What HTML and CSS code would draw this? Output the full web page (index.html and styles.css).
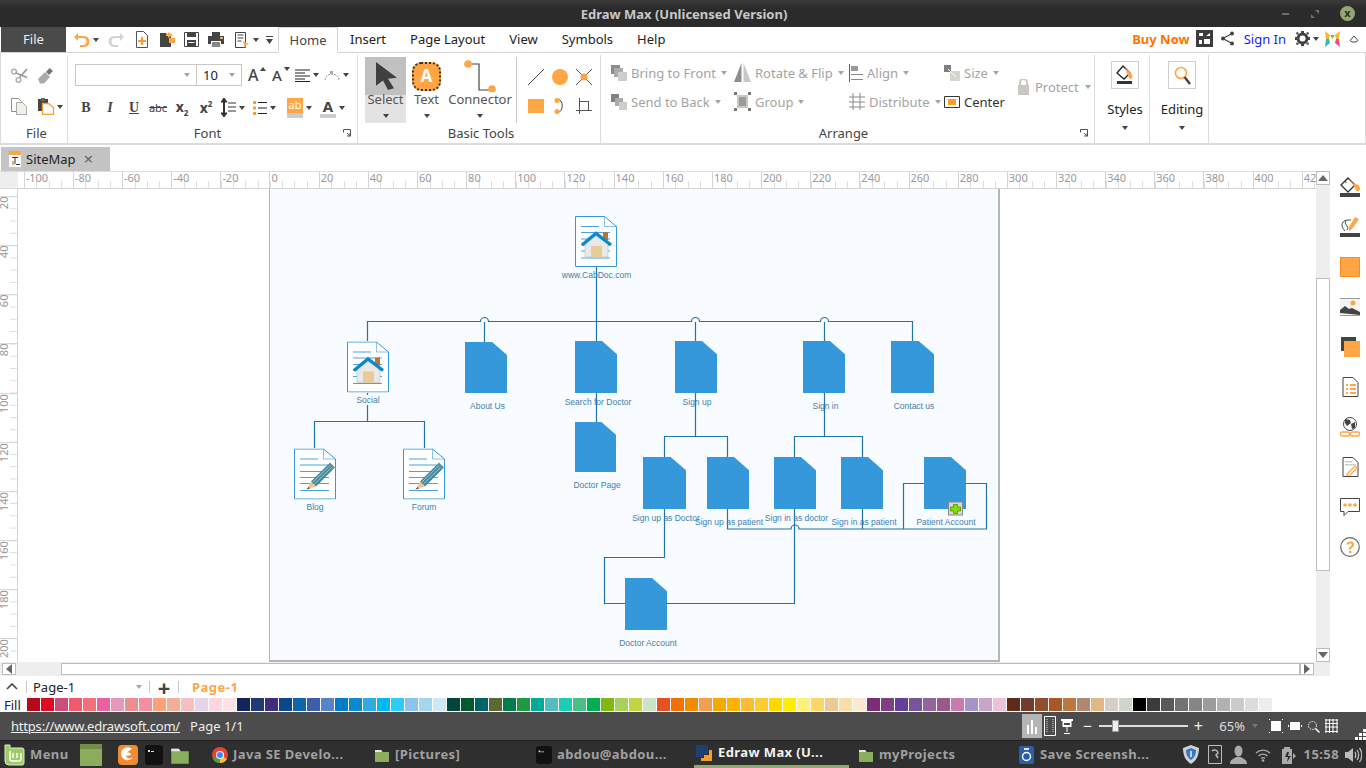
FILE: index.html
```html
<!DOCTYPE html>
<html lang="en">
<head>
    <meta charset="UTF-8">
    <title>Edraw Max (Unlicensed Version)</title>
    <link rel="stylesheet" href="styles.css">
</head>
<body>
<svg class="defs" width="0" height="0">
    <symbol id="docb" viewBox="0 0 42 51" preserveAspectRatio="none"><path d="M0 0H27L42 13V51H0Z" fill="#3498db"/></symbol>
    <symbol id="docline" viewBox="0 0 42 51">
        <path d="M.5.5H29.5L41.5 10.5V50.5H.5Z" fill="#fff" stroke="#3498db"/>
        <path d="M29.5.5V10.5H41.5" fill="none" stroke="#3498db" stroke-width=".6"/>
        <path d="M6 10.500H24M6 16.500H35M6 23H35M6 29H35M6 35H35M6 42H35" stroke="#3498db" stroke-width=".9"/>
    </symbol>
    <symbol id="dochouse" viewBox="0 0 42 51">
        <use href="#docline" width="42" height="51"/>
        <path d="M28 16h5v8h-5z" fill="#bd7336"/>
        <path d="M10 27L21 18 33 27V41H10Z" fill="#e9e9e9" stroke="#bbb" stroke-width=".6"/>
        <path d="M16 30h11v11H16z" fill="#e9cb96"/>
        <path d="M7 29L21 17.500 36 29" fill="none" stroke="#0a8bc9" stroke-width="3.400"/>
    </symbol>
    <symbol id="docpen" viewBox="0 0 42 51">
        <use href="#docline" width="42" height="51"/>
        <path d="M17 33L34 16 39 21 22 38Z" fill="#3f8a9e"/>
        <path d="M19 33.500L35.500 17.500M20.500 35.500L37 19.500" stroke="#cfe4ea" stroke-width=".7"/>
        <path d="M34 16l2-2 5 5-2 2Z" fill="#5f8f9c"/>
        <path d="M17 33L22 38 13 40.500Z" fill="#f5c48c"/>
        <path d="M14.500 38.500L16 40 12.500 41Z" fill="#444"/>
    </symbol>
    <symbol id="folder" viewBox="0 0 16 16"><path d="M1 3h6l1.500 2H15v10H1Z" fill="#8aae5c"/><path d="M1 3h6l1.500 2H1Z" fill="#e6e6e6"/></symbol>
    <symbol id="termicon" viewBox="0 0 18 20"><rect width="18" height="20" rx="3" fill="#111"/><path d="M3 5h2v2H3zM6 6h3v1H6z" fill="#ddd"/></symbol>
</svg>

<header class="titlebar">
    <span class="title-text">Edraw Max (Unlicensed Version)</span>
    <span class="win-min"></span>
    <svg class="win-max" width="8" height="8" viewBox="0 0 8 8"><path d="M4 0h4v4zM0 4l4 4H0z" fill="#6e6e6e"/></svg>
    <span class="win-close">x</span>
</header>

<nav class="tabrow">
    <div class="file-btn">File</div>
    <div class="qat">
        <svg class="qa-undo" width="17" height="15" viewBox="0 0 17 15"><path d="M5 1L1 5l4 4V6h5a3.500 3.500 0 0 1 0 7H7v2h4a5.500 5.500 0 0 0 0-11H5Z" fill="#ffa544"/></svg><i class="caret dark"></i>
        <svg class="qa-redo" width="17" height="15" viewBox="0 0 17 15"><path d="M12 1l4 4-4 4V6H7a3.500 3.500 0 0 0 0 7h3v2H6A5.500 5.500 0 0 1 6 4h6Z" fill="#d5d3cf"/></svg>
        <svg class="qa-new" width="14" height="17" viewBox="0 0 14 17"><path d="M1.500.5h7l4 4v12h-11Z" fill="#fff" stroke="#555"/><path d="M6 6h2v3h3v2H8v3H6v-3H3V9h3Z" fill="#ff9a2e"/></svg>
        <svg class="qa-open" width="15" height="15" viewBox="0 0 15 15"><path d="M0 1h6l2 2h3v12H0Z" fill="#444"/><path d="M8 0l5 3-5 3V4H6V2h2Z" fill="#ffa544"/><path d="M9 6h6v5H9z" fill="#ffa544"/></svg>
        <svg class="qa-save" width="15" height="15" viewBox="0 0 15 15"><path d="M.5.500h14v14H.5Z" fill="#fff" stroke="#444"/><path d="M3 1h9v4H3zM3 8h9v6H3z" fill="#444"/><path d="M4.500 10h6v1h-6z" fill="#fff"/></svg>
        <svg class="qa-print" width="16" height="15" viewBox="0 0 16 15"><path d="M4 0h8v4H4zM0 4h16v8h-3V9H3v3H0z" fill="#444"/><path d="M4 10h8v5H4z" fill="#888"/><path d="M12 5h3v2h-3z" fill="#ffa544"/></svg>
        <svg class="qa-page" width="15" height="16" viewBox="0 0 15 16"><path d="M.5.500h10v15H.5Z" fill="#fff" stroke="#444"/><path d="M2.500 3h6M2.500 6h6M2.500 9h4" stroke="#444"/><path d="M8 9l6 3-3 1-1 3Z" fill="#ffa544"/></svg><i class="caret dark"></i>
        <svg class="qa-more" width="7" height="8" viewBox="0 0 7 8"><path d="M0 0h7v1H0zM0 3h7L3.500 8Z" fill="#444"/></svg>
    </div>
    <div class="tab active">Home</div>
    <div class="tab">Insert</div>
    <div class="tab">Page Layout</div>
    <div class="tab">View</div>
    <div class="tab">Symbols</div>
    <div class="tab">Help</div>
    <div class="tab-right">
        <span class="buy">Buy Now</span>
        <svg width="17" height="17" viewBox="0 0 17 17"><path d="M0 0h17v17H0z" fill="#3c3c3c"/><path d="M3 3h4v3H3zM10 6l4-3v3zM3 10h3v4H3zM8 9h6v5H8z" fill="#fff"/></svg>
        <svg class="share" width="13" height="15" viewBox="0 0 13 15"><circle cx="11" cy="2.500" r="2" fill="#444"/><circle cx="2" cy="7.500" r="2" fill="#444"/><circle cx="11" cy="12.500" r="2" fill="#444"/><path d="M11 2.500L2 7.500 11 12.500" fill="none" stroke="#444" stroke-width="1.200"/></svg>
        <span class="signin">Sign In</span>
        <svg class="gear" width="15" height="15" viewBox="0 0 15 15"><circle cx="7.500" cy="7.500" r="4.500" fill="none" stroke="#444" stroke-width="3"/><path d="M6 0h3v3H6zM6 12h3v3H6zM0 6h3v3H0zM12 6h3v3h-3zM2 1l2 1-2 2-1-2zM13 1l1 1-1 2-2-2zM2 14l-1-1 1-2 2 2zM13 14l-2-1 2-2 1 2z" fill="#444"/></svg><i class="caret dark"></i>
        <svg class="logo" width="15" height="18" viewBox="0 0 15 18"><path d="M0 1l5 4-1 4H1zM15 1l-5 4 1 4h3z" fill="#f4b73b"/><path d="M0 17l5-4-1-4H1z" fill="#2fb7d6"/><path d="M15 17l-5-4 1-4h3z" fill="#ee4d7d"/><path d="M5 5h5l-2.500 4z" fill="#86c440"/></svg>
        <svg class="collapse" width="10" height="8" viewBox="0 0 10 8"><path d="M1 5.500L5 1l4 4.500-2 1.500H3Z" fill="none" stroke="#444"/></svg>
    </div>
</nav>

<section class="ribbon">
    <div class="group group-file">
        <div class="group-body file-grid">
            <svg width="17" height="15" viewBox="0 0 17 15"><circle cx="3" cy="3.500" r="2.400" fill="none" stroke="#aaa" stroke-width="1.400"/><circle cx="7.500" cy="12" r="2.400" fill="none" stroke="#aaa" stroke-width="1.400"/><path d="M5 5L16 9.500M8.500 9.500L16 1" fill="none" stroke="#9a9a9a" stroke-width="1.700"/></svg>
            <svg width="16" height="16" viewBox="0 0 16 16"><path d="M12.500 0L16 3 12 7 9 4Z" fill="#777"/><path d="M8 4l5 5-6 6.500H3L1 11Z" fill="#aaa"/></svg>
            <svg width="16" height="17" viewBox="0 0 16 17"><path d="M.5.500h7l3 3v10h-10Z" fill="#fff" stroke="#8f8f8f"/><path d="M5.500 4.500h6l4 4v8h-10Z" fill="#f2f0e8" stroke="#aaa"/></svg>
            <span class="paste"><svg width="18" height="17" viewBox="0 0 18 17"><path d="M1 1h10v12H1z" fill="#444"/><path d="M4 0h4v3H4z" fill="#666"/><path d="M5.500 5.500h6l5 4v7h-11Z" fill="#fff" stroke="#ff9a2e" stroke-width="1.300"/></svg><i class="caret dark"></i></span>
        </div>
        <div class="group-label">File</div>
    </div>

    <div class="group group-font">
        <div class="group-body">
            <div class="font-row1">
                <div class="combo combo-name"><i class="caret grey"></i></div>
                <div class="combo combo-size">10<i class="caret grey"></i></div>
                <span class="grow-a">A<i class="tri-up"></i></span>
                <span class="grow-a small">A<i class="tri-down"></i></span>
                <span class="icon-caret al"><svg width="15" height="13" viewBox="0 0 15 13"><path d="M0 1h15M0 4h10M0 7h15M0 10h10M0 12.500h15" stroke="#222" stroke-width="1.200"/></svg><i class="caret dark"></i></span>
                <span class="icon-caret"><svg width="16" height="12" viewBox="0 0 16 12"><path d="M1 11C2 3 14 3 15 11" fill="none" stroke="#999" stroke-dasharray="2 1"/><path d="M6 2h3v3H6z" fill="#aaa"/></svg><i class="caret dark"></i></span>
            </div>
            <div class="font-row2">
                <b class="fmt serif">B</b>
                <i class="fmt serif">I</i>
                <u class="fmt serif">U</u>
                <s class="fmt abc">abc</s>
                <span class="fmt script">x<sub>2</sub></span>
                <span class="fmt script">x<sup>2</sup></span>
                <span class="icon-caret spc"><svg width="15" height="19" viewBox="0 0 15 19"><path d="M3 0l3 4H0zM3 19l3-4H0zM2.500 4h1v11h-1zM7 5h8M7 9h8M7 13h8" stroke="#333" fill="#333"/></svg><i class="caret dark"></i></span>
                <span class="icon-caret lst"><svg width="14" height="14" viewBox="0 0 14 14"><path d="M0 0h3v3H0zM0 5.500h3v3H0zM0 11h3v3H0z" fill="#ff9a2e"/><path d="M5 1.500h9M5 7h9M5 12.500h9" stroke="#222" stroke-width="1.200"/></svg><i class="caret dark"></i></span>
                <span class="icon-caret hl"><span class="ab-box">ab</span><i class="caret dark"></i></span>
                <span class="icon-caret fc"><span class="a-box">A</span><i class="caret dark"></i></span>
            </div>
        </div>
        <div class="group-label">Font</div>
        <svg class="launcher" width="8" height="8" viewBox="0 0 8 8"><path d="M.5.500h7v7M.5.500v3M4 4l3 3M4 7h3V4" fill="none" stroke="#555"/></svg>
    </div>

    <div class="group group-tools">
        <div class="group-body tools-body">
            <div class="tool tool-select">
                <span class="tool-ico"><svg width="22" height="28" viewBox="0 0 22 32" preserveAspectRatio="none"><path d="M1 0L22 18 13 19 19 30 13 32 8 21 1 27Z" fill="#3f3f3f"/></svg></span>
                <span class="tool-name">Select</span><i class="caret dark"></i>
            </div>
            <div class="tool tool-text">
                <span class="tool-ico"><span class="text-ico">A</span></span>
                <span class="tool-name">Text</span><i class="caret dark"></i>
            </div>
            <div class="tool tool-conn">
                <span class="tool-ico"><svg width="32" height="32" viewBox="0 0 32 32"><path d="M6 4h9v26h14" fill="none" stroke="#444" stroke-width="1.200"/><circle cx="4" cy="4" r="3.800" fill="#ffa544"/><circle cx="28" cy="29" r="3.800" fill="#ffa544"/></svg></span>
                <span class="tool-name">Connector</span><i class="caret dark"></i>
            </div>
            <div class="shape-grid">
                <svg width="16" height="16" viewBox="0 0 16 16"><path d="M0 16L16 0" stroke="#444"/></svg>
                <svg width="16" height="16" viewBox="0 0 16 16"><circle cx="8" cy="8" r="8" fill="#ffa544"/></svg>
                <svg width="16" height="16" viewBox="0 0 16 16"><path d="M0 0L16 16M16 0L0 16" stroke="#555"/><circle cx="8" cy="8" r="3.500" fill="#ffa544"/></svg>
                <svg width="16" height="14" viewBox="0 0 16 14"><path d="M0 0h16v14H0z" fill="#ffa544"/></svg>
                <svg width="12" height="16" viewBox="0 0 12 16"><path d="M3 1C10 1 10 14 3 15" fill="none" stroke="#444"/><circle cx="3" cy="2.500" r="2.500" fill="#ffa544"/><circle cx="3" cy="13.500" r="2.500" fill="#ffa544"/></svg>
                <svg width="16" height="16" viewBox="0 0 16 16"><path d="M3 0h1v12h12v1H4v3H3v-3H0v-1h3zM4 3h9v9h-1V4H4zM5 11l7-7" stroke="none" fill="#555"/></svg>
            </div>
        </div>
        <div class="group-label">Basic Tools</div>
    </div>

    <div class="group group-arrange">
        <div class="group-body arrange-grid">
            <div class="arr off">
                <svg width="16" height="16" viewBox="0 0 16 16"><path d="M0 0h9v9H0z" fill="#8c8c8c"/><path d="M3 3h9v9H3z" fill="#ababab"/><path d="M7 7h9v9H7z" fill="#d0cdc8"/></svg>
                <span>Bring to Front</span><i class="caret grey"></i>
            </div>
            <div class="arr off">
                <svg width="17" height="19" viewBox="0 0 17 19"><path d="M7.500 0v19H0Z" fill="#8c8c8c"/><path d="M9.500 0v19H17Z" fill="#c9c7c2"/></svg>
                <span>Rotate &amp; Flip</span><i class="caret grey"></i>
            </div>
            <div class="arr off">
                <svg width="14" height="18" viewBox="0 0 14 18"><path d="M0 0h1v18H0z" fill="#666"/><path d="M2 2h7v5H2z" fill="#999"/><path d="M2 10h12v1H2zM2 15h12v1H2z" fill="#888"/></svg>
                <span>Align</span><i class="caret grey"></i>
            </div>
            <div class="arr off">
                <svg width="16" height="16" viewBox="0 0 16 16"><path d="M0 0h7v7H0z" fill="#7f7f7f"/><path d="M6 6h10v10H6z" fill="#d6d4cf"/><path d="M4 4l8 8" stroke="#fff"/></svg>
                <span>Size</span><i class="caret grey"></i>
            </div>
            <div class="arr off arr-protect">
                <svg width="13" height="16" viewBox="0 0 13 16"><path d="M3 7V3.500a3.500 3.500 0 0 1 7 0V7" fill="none" stroke="#c9c7c2" stroke-width="2"/><path d="M1 6h11v10H1z" fill="#c9c7c2"/></svg>
                <span>Protect</span><i class="caret grey"></i>
            </div>
            <div class="arr off">
                <svg width="16" height="16" viewBox="0 0 16 16"><path d="M0 0h8v8H0z" fill="#7f7f7f"/><path d="M4 4h8v8H4z" fill="#ababab"/><path d="M8 8h8v8H8z" fill="#d0cdc8"/></svg>
                <span>Send to Back</span><i class="caret grey"></i>
            </div>
            <div class="arr off">
                <svg width="17" height="19" viewBox="0 0 17 19"><path d="M3 3h11v13H3z" fill="#c9c7c2"/><path d="M5 5h7v9H5z" fill="#9a9a9a"/><path d="M0 0h3v3H0zM14 0h3v3h-3zM0 16h3v3H0zM14 16h3v3h-3z" fill="#777"/></svg>
                <span>Group</span><i class="caret grey"></i>
            </div>
            <div class="arr off">
                <svg width="16" height="17" viewBox="0 0 16 17"><path d="M4 0v17M11 0v17M0 4h16M0 9h16M0 14h16" stroke="#888"/></svg>
                <span>Distribute</span><i class="caret grey"></i>
            </div>
            <div class="arr on">
                <svg width="16" height="12" viewBox="0 0 16 12"><path d="M.5.500h15v11H.5Z" fill="#fff" stroke="#333"/><path d="M4 3h8v6H4z" fill="#ff9a2e"/></svg>
                <span>Center</span>
            </div>
        </div>
        <div class="group-label">Arrange</div>
        <svg class="launcher" width="8" height="8" viewBox="0 0 8 8"><path d="M.5.500h7v7M.5.500v3M4 4l3 3M4 7h3V4" fill="none" stroke="#555"/></svg>
    </div>

    <div class="group group-drop group-styles">
        <span class="drop-box"><svg width="18" height="20" viewBox="0 0 18 20"><path d="M7 1l7 7-6 6-7-6Z" fill="#fff" stroke="#222" stroke-width="1.300"/><path d="M9 3l6 5c2 3 2 5 0 6-2 0-2-2-3-3Z" fill="#ffa544"/><path d="M1 16h15v3H1z" fill="#333"/></svg></span>
        <span class="drop-name">Styles</span><i class="caret dark"></i>
    </div>
    <div class="group group-drop group-editing">
        <span class="drop-box"><svg width="17" height="19" viewBox="0 0 17 19"><circle cx="7" cy="7" r="5.500" fill="none" stroke="#ffa544" stroke-width="1.600"/><path d="M10.500 11l5.500 7" stroke="#444" stroke-width="2.400"/></svg></span>
        <span class="drop-name">Editing</span><i class="caret dark"></i>
    </div>
</section>

<div class="doctabs">
    <div class="doctab">
        <svg width="12" height="16" viewBox="0 0 12 16"><path d="M0 0h12v16H0z" fill="#fff"/><path d="M0 0h12v4H0z" fill="#ffa544"/><path d="M3 6h6v1H3zM5.500 7h1v6h-1zM7 13h4v1H7z" fill="#333"/><path d="M3 10h2v4H3z" fill="#ffa544"/></svg>
        <span>SiteMap</span>
        <span class="doctab-x">×</span>
    </div>
</div>

<div class="workspace">
    <div class="editor">
        <div class="ruler-corner"></div>
        <div class="ruler-top">
            <span>-100</span><span>-80</span><span>-60</span><span>-40</span><span>-20</span><span>0</span><span>20</span><span>40</span><span>60</span><span>80</span><span>100</span><span>120</span><span>140</span><span>160</span><span>180</span><span>200</span><span>220</span><span>240</span><span>260</span><span>280</span><span>300</span><span>320</span><span>340</span><span>360</span><span>380</span><span>400</span><span>420</span>
        </div>
        <div class="vscroll">
            <div class="sb-btn"><i class="tri-up big"></i></div>
            <div class="sb-track"></div>
            <div class="sb-thumb"></div>
            <div class="sb-rest"></div>
            <div class="sb-btn"><i class="tri-down big"></i></div>
        </div>
        <div class="ruler-left">
            <span>20</span><span>40</span><span>60</span><span>80</span><span>100</span><span>120</span><span>140</span><span>160</span><span>180</span><span>200</span>
        </div>
        <div class="canvas">
            <div class="sheet">
                <svg width="729" height="472" viewBox="270 189 729 472">
                    <g fill="none" stroke="#2273a8" stroke-width="1.200">
                        <path d="M596.500 267V341"/>
                        <path d="M367.500 341V321.500H480.500a4 4 0 0 1 8 0H691.500a4 4 0 0 1 8 0H820.500a4 4 0 0 1 8 0H912.500V341"/>
                        <path d="M484.500 322V342M695.500 322V341M824.500 322V341"/>
                        <path d="M367.500 393V395M367.500 405V421.500M314.500 448V421.500H424.500V448"/>
                        <path d="M596.500 393V422"/>
                        <path d="M695.500 393V436.500M664.500 457V436.500H727.500V457"/>
                        <path d="M824.500 393V436.500M794.500 457V436.500H862.500V457"/>
                        <path d="M727.500 509V529H791a4 4 0 0 1 8 0H986.500V483.500H966M862.500 509V529M903.500 529V483.500H924"/>
                        <path d="M664.500 509V557.500H604.500V603.500H625M667 603.500H794.500V509"/>
                    </g>
                    <use href="#dochouse" x="575" y="216" width="42" height="51"/>
                    <use href="#dochouse" x="347" y="341" width="42" height="52"/>
                    <use href="#docpen" x="294" y="448" width="42" height="52"/>
                    <use href="#docpen" x="403" y="448" width="42" height="52"/>
                    <use href="#docb" x="465" y="342" width="42" height="51"/>
                    <use href="#docb" x="575" y="341" width="42" height="52"/>
                    <use href="#docb" x="575" y="422" width="41" height="50"/>
                    <use href="#docb" x="675" y="341" width="42" height="52"/>
                    <use href="#docb" x="803" y="341" width="42" height="52"/>
                    <use href="#docb" x="891" y="341" width="43" height="52"/>
                    <use href="#docb" x="643" y="457" width="43" height="52"/>
                    <use href="#docb" x="707" y="457" width="42" height="52"/>
                    <use href="#docb" x="774" y="457" width="42" height="52"/>
                    <use href="#docb" x="841" y="457" width="42" height="52"/>
                    <use href="#docb" x="924" y="457" width="42" height="52"/>
                    <use href="#docb" x="625" y="578" width="42" height="52"/>
                    <g class="labels" text-anchor="middle">
                        <text x="596.500" y="278">www.CabDoc.com</text>
                        <text x="368" y="403">Social</text>
                        <text x="487.500" y="409">About Us</text>
                        <text x="598" y="405">Search for Doctor</text>
                        <text x="697" y="405">Sign up</text>
                        <text x="825.500" y="409">Sign in</text>
                        <text x="914" y="409">Contact us</text>
                        <text x="315" y="510">Blog</text>
                        <text x="424" y="510">Forum</text>
                        <text x="597" y="488">Doctor Page</text>
                        <text x="666" y="521">Sign up as Doctor</text>
                        <text x="729" y="525">Sign up as patient</text>
                        <text x="796.500" y="521">Sign in as doctor</text>
                        <text x="864" y="525">Sign in as patient</text>
                        <text x="946" y="525">Patient Account</text>
                        <text x="648" y="646">Doctor Account</text>
                    </g>
                    <rect x="948.500" y="502" width="14" height="13" fill="#d8d8d8" stroke="#888"/>
                    <path d="M953.500 504.500h4v2.500h3v4h-3v2.500h-4V511h-3v-4h3Z" fill="#7fe000" stroke="#3d8a00" stroke-width=".7"/>
                </svg>
            </div>
        </div>
        <div class="hscroll">
            <div class="sb-btn"><i class="tri-left"></i></div>
            <div class="hs-track"></div>
            <div class="hs-thumb"></div>
            <div class="sb-btn"><i class="tri-right"></i></div>
        </div>
    </div>
    <aside class="sidepanel">
        <svg width="20" height="20" viewBox="0 0 20 20"><path d="M8 1l7 7-7 7-7-7Z" fill="#fff" stroke="#333" stroke-width="1.300"/><path d="M8 2c-2 0-3 2-2 4" fill="none" stroke="#333"/><path d="M9 2l5 5c5 0 6 3 6 5s-3 3-4 1l-2-4Z" fill="#ffa544"/><path d="M0 16h20v4H0z" fill="#444"/></svg>
        <svg width="20" height="20" viewBox="0 0 20 20"><path d="M5 14C-1 8 3 3 8 3h3M6 4c-3 3 4 5 1 9" fill="none" stroke="#444"/><path d="M15 0l4 2-7 10-3 2 0-4Z" fill="#ffa544"/><path d="M0 16h20v4H0z" fill="#444"/></svg>
        <svg width="20" height="20" viewBox="0 0 20 20"><path d="M.5.500h19v19H.5Z" fill="#ffa544" stroke="#f58c1e"/></svg>
        <svg width="20" height="18" viewBox="0 0 20 18"><path d="M0 0h20v18H0z" fill="#f4f4f4"/><path d="M0 0h20v1H0zM0 17h20v1H0z" fill="#999"/><circle cx="13" cy="5" r="2.500" fill="#ffa544"/><path d="M0 15V12l5-4 4 3 3-1 8 4v3Z" fill="#444"/></svg>
        <svg width="20" height="20" viewBox="0 0 20 20"><path d="M1 0h15v14H1z" fill="#444"/><path d="M4 4h16v16H4z" fill="#ffa544"/></svg>
        <svg width="17" height="20" viewBox="0 0 17 20"><path d="M1 .500h10l5 5v14H1Z" fill="#fff" stroke="#444"/><path d="M4 7h2v2H4zM4 11h2v2H4zM4 15h2v2H4zM8 7h6v2H8zM8 11h6v2H8zM8 15h6v2H8z" fill="#ffa544"/></svg>
        <svg width="20" height="20" viewBox="0 0 20 20"><circle cx="10" cy="7" r="6.500" fill="#fff" stroke="#444"/><path d="M5 2l5 1 1 3-4 3-2-3zM11 7l4-2v6l-3 1Z" fill="#444"/><rect x=".5" y="15" width="9" height="4" rx="2" fill="none" stroke="#ffa544" stroke-width="1.400"/><rect x="10.500" y="15" width="9" height="4" rx="2" fill="none" stroke="#ffa544" stroke-width="1.400"/></svg>
        <svg width="17" height="20" viewBox="0 0 17 20"><path d="M1 .500h10l5 5v14H1Z" fill="#fff" stroke="#444"/><path d="M3 4h7v1.500H3zM3 7h11v1.500H3z" fill="#ccc"/><path d="M6 16l7-7 2 2-7 7-3 0Z" fill="none" stroke="#ffa544" stroke-width="1.200"/></svg>
        <svg width="20" height="18" viewBox="0 0 20 18"><path d="M.5.500h19v13H8L4 17.500V13.500H.5Z" fill="#fff" stroke="#444"/><circle cx="5" cy="7" r="1.800" fill="#ffa544"/><circle cx="10" cy="7" r="1.800" fill="#ffa544"/><circle cx="15" cy="7" r="1.800" fill="#ffa544"/></svg>
        <svg width="20" height="20" viewBox="0 0 20 20"><circle cx="10" cy="10" r="9.300" fill="#fff" stroke="#666" stroke-width="1.200"/><path d="M6.500 7.500C6.500 3.500 14 3.500 14 7.500c0 3-3 2.500-3 5H9c0-3.500 2.700-3 2.700-5 0-1.500-3-1.500-3 0Z" fill="#ffa544"/><path d="M9 14h2.300v2.300H9z" fill="#ffa544"/></svg>
    </aside>
</div>

<div class="pagebar">
    <svg class="pb-up" width="12" height="7" viewBox="0 0 12 7"><path d="M1 6l5-5 5 5" fill="none" stroke="#444" stroke-width="1.600"/></svg>
    <span class="pb-sep"></span>
    <span class="pb-name">Page-1<i class="caret grey"></i></span>
    <span class="pb-sep"></span>
    <span class="pb-plus">+</span>
    <span class="pb-sep"></span>
    <span class="pb-active">Page-1</span>
</div>

<div class="colorbar">
    <span class="fill-label">Fill</span>
    <div class="swatches">
        <i style="background:#b30a1c"></i><i style="background:#dd0a23"></i><i style="background:#c94f78"></i><i style="background:#ef5a6c"></i><i style="background:#f2717a"></i><i style="background:#e7629f"></i><i style="background:#e598b8"></i><i style="background:#ee8d8d"></i><i style="background:#f2919e"></i><i style="background:#ffa178"></i><i style="background:#f2ae98"></i><i style="background:#f8bfbf"></i><i style="background:#e7d5e6"></i><i style="background:#fdd5e5"></i><i style="background:#fde1e5"></i>
        <i style="background:#12265b"></i><i style="background:#213a75"></i><i style="background:#3f2e7b"></i><i style="background:#0b478d"></i><i style="background:#0c66a8"></i><i style="background:#3f5ea9"></i><i style="background:#5784c6"></i><i style="background:#007cc9"></i><i style="background:#0c88cc"></i><i style="background:#2faae2"></i><i style="background:#00b9f2"></i><i style="background:#2ecbfb"></i><i style="background:#8ec2ea"></i><i style="background:#a3d7f0"></i><i style="background:#cbe8f5"></i>
        <i style="background:#00473a"></i><i style="background:#00592f"></i><i style="background:#006464"></i><i style="background:#596a30"></i><i style="background:#007c4d"></i><i style="background:#1f9943"></i><i style="background:#00ac96"></i><i style="background:#55bcc0"></i><i style="background:#1ccdb2"></i><i style="background:#49bf85"></i><i style="background:#00b050"></i><i style="background:#7fb80e"></i><i style="background:#a8cf60"></i><i style="background:#bfd640"></i><i style="background:#cbe4c8"></i>
        <i style="background:#e55025"></i><i style="background:#f27000"></i><i style="background:#f28b00"></i><i style="background:#f59e53"></i><i style="background:#f4a900"></i><i style="background:#ffb300"></i><i style="background:#ffbb33"></i><i style="background:#fccc30"></i><i style="background:#ffd800"></i><i style="background:#ffee00"></i><i style="background:#fdf17c"></i><i style="background:#fed566"></i><i style="background:#e9cb96"></i><i style="background:#fddcac"></i><i style="background:#fde9d0"></i>
        <i style="background:#7a2e73"></i><i style="background:#813d82"></i><i style="background:#653e98"></i><i style="background:#76559c"></i><i style="background:#93649f"></i><i style="background:#9d5789"></i><i style="background:#c87bb0"></i><i style="background:#a793cc"></i><i style="background:#c6a5c6"></i><i style="background:#ebc2da"></i>
        <i style="background:#5e2b17"></i><i style="background:#733a2d"></i><i style="background:#914e2b"></i><i style="background:#a95727"></i><i style="background:#bd7840"></i><i style="background:#b28770"></i><i style="background:#e0b887"></i><i style="background:#d5cec6"></i><i style="background:#cbd6cd"></i>
        <i style="background:#000000"></i><i style="background:#3d3a3b"></i><i style="background:#595959"></i><i style="background:#727272"></i><i style="background:#868686"></i><i style="background:#9c9c9c"></i><i style="background:#b2b2b2"></i><i style="background:#cbcbcb"></i><i style="background:#dcdcdc"></i><i style="background:#ededed"></i>
    </div>
</div>

<footer class="statusbar">
    <a class="status-url">https://www.edrawsoft.com/</a>
    <span class="status-page">Page 1/1</span>
    <div class="status-right">
        <span class="view-on"><svg width="12" height="16" viewBox="0 0 12 16"><path d="M1 7h2v9H1zM5 2h2v14H5zM9 9h2v7H9z" fill="#fff"/></svg></span>
        <svg width="12" height="20" viewBox="0 0 12 20"><path d="M.5.500h11v19H.5Z" fill="none" stroke="#fff"/><path d="M3 3v14M9 3v14" stroke="#ddd" stroke-dasharray="1 1"/></svg>
        <svg width="12" height="15" viewBox="0 0 12 15"><path d="M0 0h12v2H0zM1.500 2h9v6h-9zM5.500 8h1v5h-1zM3 14h6v1H3z" fill="#fff"/><path d="M3 4h6v2H3z" fill="#4c4c4c"/></svg>
        <span class="zm-sign zm-minus">−</span>
        <span class="slider"><i></i></span>
        <span class="zm-sign">+</span>
        <span class="zm-val">65%</span>
        <i class="caret zm-caret"></i>
        <svg width="14" height="14" viewBox="0 0 14 14"><path d="M2 2h10v10H2z" fill="#fff"/><path d="M0 0h1v1H0zM13 0h1v1h-1zM0 13h1v1H0zM13 13h1v1h-1z" fill="#fff"/></svg>
        <svg width="14" height="10" viewBox="0 0 14 10"><path d="M2 1h10v8H2zM0 4h1v2H0zM13 4h1v2h-1z" fill="#fff"/></svg>
        <svg width="13" height="13" viewBox="0 0 13 13"><circle cx="5.500" cy="5.500" r="4" fill="none" stroke="#fff" stroke-dasharray="1.500 1"/><path d="M8.500 8.500l4 4" stroke="#fff" stroke-width="1.500"/></svg>
        <svg width="13" height="14" viewBox="0 0 13 14"><path d="M1 0v14M4.500 0v14M8 0v14M12 0v14M0 1h13M0 4.500h13M0 8h13M0 12.500h13" stroke="#fff"/></svg>
    </div>
    <svg class="grip" width="11" height="11" viewBox="0 0 11 11"><path d="M8 0h3v3H8zM4 4h3v3H4zM8 4h3v3H8zM0 8h3v3H0zM4 8h3v3H4zM8 8h3v3H8z" fill="#fff"/></svg>
</footer>

<div class="taskbar">
    <div class="launch">
        <svg width="21" height="22" viewBox="0 0 21 22"><path d="M1 1h5v3h12a2 2 0 0 1 2 2v13a2 2 0 0 1-2 2H5a4 4 0 0 1-4-4Z" fill="#9ccc65" stroke="#dfeccd"/><path d="M6 7v8c0 2 1 2 2 2h7c1 0 2-1 2-2V9M9 14V9M13 14V9" fill="none" stroke="#fff" stroke-width="1.500"/></svg>
        <span class="task-txt menu-txt">Menu</span>
        <svg class="lc-files" width="22" height="22" viewBox="0 0 22 22"><path d="M0 0h22v22H0z" fill="#8aae5c"/><path d="M0 0h22v5H0z" fill="#6f8f47"/></svg>
        <svg class="lc-fox" width="20" height="20" viewBox="0 0 20 20"><rect width="20" height="20" rx="4" fill="#f08a33"/><path d="M14 4a6.500 6.500 0 1 0 1 8c-2 2-6 2-7-1l5-1c0-2-2-3-4-2 1-2 3-3 5-4Z" fill="#fff"/></svg>
        <svg class="lc-term" width="20" height="20"><use href="#termicon" width="20" height="20"/></svg>
        <svg class="lc-fold" width="20" height="20"><use href="#folder" width="20" height="20"/></svg>
    </div>
    <div class="task t-java">
        <svg width="16" height="16" viewBox="0 0 16 16"><circle cx="8" cy="8" r="8" fill="#e5432f"/><path d="M8 8L1 12a8 8 0 0 0 7 4Z" fill="#3da548"/><path d="M8 8l7 4a8 8 0 0 1-7 4Z" fill="#fbc02d"/><circle cx="8" cy="8" r="4" fill="#fff"/><circle cx="8" cy="8" r="3" fill="#4285f4"/></svg>
        <span class="task-txt">Java SE Develo...</span>
    </div>
    <div class="task t-pics">
        <svg width="16" height="16"><use href="#folder" width="16" height="16"/></svg>
        <span class="task-txt">[Pictures]</span>
    </div>
    <div class="task t-term">
        <svg width="16" height="18"><use href="#termicon" width="16" height="18"/></svg>
        <span class="task-txt">abdou@abdou...</span>
    </div>
    <div class="task t-edraw">
        <svg width="16" height="16" viewBox="0 0 16 16"><path d="M0 0h12v9H7v3H0z" fill="#1d3f75"/><path d="M8 10h5V5h3v11H5v-3h3z" fill="#f59b32"/></svg>
        <span class="task-txt">Edraw Max (U...</span>
    </div>
    <div class="task t-proj">
        <svg width="16" height="16"><use href="#folder" width="16" height="16"/></svg>
        <span class="task-txt">myProjects</span>
    </div>
    <div class="task t-shot">
        <svg width="15" height="18" viewBox="0 0 15 18"><rect width="15" height="18" rx="2" fill="#2a5ea8"/><path d="M5 2h5v2H5z" fill="#dfe8f5"/><circle cx="7.500" cy="10.500" r="4" fill="none" stroke="#fff" stroke-width="1.500"/></svg>
        <span class="task-txt">Save Screensh...</span>
    </div>
    <div class="tray">
        <svg width="16" height="19" viewBox="0 0 16 19"><path d="M8 0l8 3c0 8-3 13-8 16C3 16 0 11 0 3Z" fill="#cfd3d6"/><path d="M8 3l5 2c0 5-2 8-5 10-3-2-5-5-5-10Z" fill="#3b78c2"/><path d="M7.300 6h1.400v6H7.300z" fill="#fff"/></svg>
        <svg class="tr-clip" width="14" height="19" viewBox="0 0 14 19"><path d="M.5.500h13v18H.5Z" fill="#333" stroke="#bbb"/><path d="M4 6a3.500 3.500 0 0 1 6 2l-2 2 2 3" fill="none" stroke="#bbb" stroke-width="1.500"/></svg>
        <svg class="tr-user" width="17" height="19" viewBox="0 0 17 19"><ellipse cx="8.500" cy="6" rx="4" ry="5.500" fill="#aaa"/><path d="M0 19c0-5 4-5 6-7h5c2 2 6 2 6 7Z" fill="#aaa"/></svg>
        <svg class="tr-wifi" width="16" height="14" viewBox="0 0 16 14"><path d="M1 5a10 10 0 0 1 14 0M3.500 8a6.500 6.500 0 0 1 9 0M6 10.500a3 3 0 0 1 4 0" fill="none" stroke="#aaa" stroke-width="1.300"/><circle cx="8" cy="12.500" r="1.300" fill="#aaa"/></svg>
        <svg class="tr-batt" width="15" height="19" viewBox="0 0 15 19"><path d="M3 2h6v2h2v15H1V4h2Z" fill="#aaa"/><path d="M6 7l-2 5h3l-1 5 4-6H7l1-4Z" fill="#2f2f2f"/><path d="M12 8l3 3-3 3Z" fill="#aaa"/></svg>
        <span class="task-txt clock">15:58</span>
        <svg class="tr-vol" width="17" height="16" viewBox="0 0 17 16"><path d="M0 5h3l5-4v14l-5-4H0Z" fill="#bbb"/><path d="M10 5c1 2 1 4 0 6M12 3c2 3 2 7 0 10M14.500 1c3 4 3 10 0 14" fill="none" stroke="#bbb" stroke-width="1.300"/></svg>
    </div>
</div>
</body>
</html>
```

FILE: styles.css
```css
* {
    box-sizing: border-box;
}

body {
    margin: 0;
    width: 1366px;
    height: 768px;
    overflow: hidden;
    background: #fff;
    font-family: "Noto Sans", sans-serif;
    font-size: 13px;
    color: #333;
}

.defs {
    position: absolute;
}

svg {
    display: block;
    flex: none;
}

/* small triangles */
.caret {
    display: inline-block;
    width: 0;
    height: 0;
    border-left: 3px solid transparent;
    border-right: 3px solid transparent;
    border-top: 4px solid #444;
    flex: none;
}

.caret.grey {
    border-top-color: #a5a5a5;
}

.tri-up, .tri-down, .tri-left, .tri-right {
    display: block;
    width: 0;
    height: 0;
    border: 3px solid transparent;
}

/* title bar */
.titlebar {
    height: 27px;
    background: linear-gradient(#3a3a3a, #2b2b2b 30%);
    display: flex;
    align-items: center;
    position: relative;
}

.title-text {
    position: absolute;
    left: 0;
    width: 1368px;
    text-align: center;
    font-weight: 700;
    font-size: 13px;
    color: #c6c8c9;
}

.win-min {
    margin-left: 1282px;
    width: 7px;
    height: 2px;
    background: #6e6e6e;
}

.win-max {
    margin-left: 22px;
}

.win-close {
    margin-left: 21px;
    width: 15px;
    height: 15px;
    border-radius: 50%;
    background: #93a870;
    color: #2b2b2b;
    font-size: 11px;
    font-weight: 700;
    line-height: 14px;
    text-align: center;
}

/* tabs row */
.tabrow {
    height: 26px;
    display: flex;
    border-bottom: 1px solid #d4d4d4;
    padding-left: 1px;
}

.file-btn {
    width: 65px;
    height: 25px;
    background: #4a4a4a;
    color: #eee;
    text-align: center;
    line-height: 25px;
}

.qat {
    width: 212px;
    display: flex;
    align-items: center;
    padding-left: 7px;
    height: 25px;
}

.qat .caret {
    margin-left: 3px;
}

.qa-redo {
    margin-left: 9px;
}

.qa-new {
    margin-left: 10px;
}

.qa-open {
    margin-left: 11px;
}

.qa-save {
    margin-left: 9px;
}

.qa-print {
    margin-left: 9px;
}

.qa-page {
    margin-left: 11px;
}

.qa-more {
    margin-left: 7px;
}

.tab {
    height: 26px;
    padding: 0 12px;
    line-height: 24px;
    color: #222;
    font-size: 13px;
}

.tab.active {
    width: 60px;
    padding: 0;
    text-align: center;
    background: #fff;
    color: #444;
    border: 1px solid #d4d4d4;
    border-bottom: 1px solid #fff;
}

.tab-right {
    margin-left: auto;
    display: flex;
    align-items: center;
    height: 23px;
}

.buy {
    color: #ff7300;
    font-weight: 700;
    margin-right: 6px;
}

.share {
    margin-left: 8px;
}

.signin {
    color: #1a1aff;
    margin-left: 10px;
}

.gear {
    margin-left: 9px;
}

.tab-right .caret {
    margin-left: 3px;
}

.logo {
    margin-left: 6px;
}

.collapse {
    margin: 0 7px 0 9px;
}

/* ribbon */
.ribbon {
    height: 92px;
    display: flex;
    border-bottom: 2px solid #dcdcdc;
    border-left: 1px solid #dcdcdc;
    border-right: 1px solid #dcdcdc;
    padding-top: 2px;
}

.group {
    position: relative;
    display: flex;
    flex-direction: column;
    border-right: 1px solid #dcdcdc;
    flex: none;
}

.group-body {
    height: 68px;
}

.group-label {
    height: 20px;
    text-align: center;
    line-height: 20px;
    color: #444;
}

.launcher {
    position: absolute;
    right: 6px;
    bottom: 6px;
}

.group-file {
    width: 67px;
}

.group-file .group-label {
    padding-left: 5px;
}

.file-grid {
    display: grid;
    grid-template-columns: 26px 38px;
    grid-template-rows: 31px 31px;
    padding: 5px 0 0 10px;
    align-items: center;
}

.paste {
    display: flex;
    align-items: center;
    gap: 2px;
}

.group-font {
    width: 290px;
}

.group-font .group-label {
    padding-right: 10px;
}

.font-row1 {
    display: flex;
    align-items: center;
    padding: 9px 0 0 7px;
}

.combo {
    height: 22px;
    border: 1px solid #c8c8c8;
    display: flex;
    align-items: center;
    justify-content: space-between;
    padding: 0 6px;
    color: #222;
}

.combo-name {
    width: 122px;
    justify-content: flex-end;
}

.combo-size {
    width: 46px;
    margin-left: -1px;
}

.grow-a {
    position: relative;
    font-size: 16px;
    font-weight: 500;
    color: #444;
    margin-left: 6px;
    width: 20px;
    line-height: 22px;
}

.grow-a.small {
    margin-left: 4px;
    font-size: 15px;
}

.tri-up {
    border-bottom: 4px solid #444;
    border-top: 0;
}

.tri-down {
    border-top: 4px solid #444;
    border-bottom: 0;
}

.grow-a i {
    position: absolute;
    top: 3px;
    right: 2px;
}

.icon-caret {
    display: flex;
    align-items: center;
    gap: 3px;
}

.al {
    margin: 0 5px 0 3px;
}

.font-row2 {
    display: flex;
    align-items: center;
    padding: 11px 0 0 6px;
    height: 32px;
}

.fmt {
    width: 24px;
    text-align: center;
    color: #444;
    font-size: 13px;
    flex: none;
}

.serif {
    font-family: "Liberation Serif", serif;
    font-weight: 700;
    font-size: 14px;
}

.abc {
    font-size: 11px;
}

.script {
    font-weight: 700;
    font-size: 14px;
}

.script sub, .script sup {
    font-size: 8px;
}

.spc {
    margin-left: 3px;
}

.lst {
    margin-left: 8px;
}

.hl {
    margin-left: 11px;
}

.ab-box {
    width: 16px;
    height: 20px;
    background: linear-gradient(#ffa544 15px, #ccc 15px);
    color: #fff;
    font-size: 11px;
    line-height: 13px;
    text-align: center;
}

.fc {
    margin-left: 8px;
}

.a-box {
    width: 16px;
    height: 20px;
    font-size: 15px;
    font-weight: 700;
    color: #444;
    line-height: 16px;
    text-align: center;
    border-bottom: 4px solid #ccc;
}

.group-tools {
    width: 243px;
}

.group-tools .group-label {
    padding-left: 4px;
}

.tools-body {
    display: flex;
    padding: 2px 0 0 7px;
}

.tool {
    display: flex;
    flex-direction: column;
    align-items: center;
    height: 66px;
    flex: none;
}

.tool-ico {
    height: 38px;
    display: flex;
    align-items: center;
    justify-content: center;
    flex: none;
    width: 100%;
}

.tool-name {
    height: 18px;
    line-height: 16px;
    margin-top: -4px;
    color: #555;
}

.tool .caret {
    margin-top: 5px;
}

.tool-select {
    width: 41px;
    background: linear-gradient(#c0c0c0 38px, #e3e3e3 38px);
}

.tool-text {
    width: 41px;
}

.text-ico {
    width: 29px;
    height: 29px;
    border: 2px dotted #333;
    background: #ffa544;
    border-radius: 9px;
    color: #fff;
    font-weight: 700;
    font-size: 17px;
    line-height: 24px;
    text-align: center;
}

.tool-conn {
    width: 66px;
    margin-right: 3px;
}

.shape-grid {
    border-left: 1px solid #c8c8c8;
    height: 66px;
    padding: 5px 0 0 7px;
    display: grid;
    grid-template-columns: 24px 24px 24px;
    grid-template-rows: 29px 29px;
    justify-items: center;
    align-items: center;
    align-content: start;
    width: 80px;
    flex: none;
}

.group-arrange {
    width: 494px;
}

.group-arrange .group-label {
    padding-right: 8px;
}

.arrange-grid {
    display: grid;
    grid-template-columns: 123px 115px 95px 73px auto;
    grid-template-rows: 29px 29px;
    padding: 3px 0 0 10px;
}

.arr {
    display: flex;
    align-items: center;
    gap: 4px;
}

.arr.off {
    color: #a3a3a3;
}

.arr.on {
    color: #333;
}

.arr i {
    margin-left: 1px;
}

.arr-protect {
    grid-row: span 2;
    gap: 5px;
}

.group-drop {
    display: flex;
    flex-direction: column;
    align-items: center;
    padding: 6px 0 0 6px;
}

.group-styles {
    width: 55px;
}

.group-editing {
    width: 59px;
}

.drop-box {
    width: 28px;
    height: 28px;
    border: 1px solid #d0d0d0;
    display: flex;
    align-items: center;
    justify-content: center;
}

.drop-name {
    color: #222;
    margin-top: 11px;
    line-height: 18px;
}

.group-drop .caret {
    margin-top: 8px;
}

/* document tabs */
.doctabs {
    height: 26px;
    padding: 2px 0 0 1px;
}

.doctab {
    width: 109px;
    height: 24px;
    background: #c4c4c4;
    display: flex;
    align-items: center;
    padding-left: 8px;
    color: #222;
}

.doctab span:first-of-type {
    margin-left: 5px;
}

.doctab-x {
    margin-left: 8px;
    color: #666;
    font-size: 17px;
    line-height: 20px;
}

/* work area */
.workspace {
    height: 505px;
    display: flex;
}

.editor {
    width: 1330px;
    display: grid;
    grid-template-columns: 18px 1298px 14px;
    grid-template-rows: 18px 473px 14px;
}

.ruler-corner {
    background: #eee;
    border-top: 1px solid #ddd;
    border-bottom: 1px solid #ddd;
}

.ruler-top {
    display: flex;
    overflow: hidden;
    padding-left: 5.700px;
    border-top: 1px solid #ddd;
    border-bottom: 1px solid #d4d4d4;
    background: repeating-linear-gradient(90deg, #ddd 0 1px, transparent 1px 12.290px) 5.700px 100% / 100% 7px no-repeat;
}

.ruler-top span {
    flex: 0 0 49.160px;
    border-left: 1px solid #d4d4d4;
    font-size: 11px;
    line-height: 12px;
    color: #999;
    padding-left: 1px;
    white-space: nowrap;
}

.ruler-left {
    display: flex;
    flex-direction: column;
    padding-top: 7px;
    background: linear-gradient(#ddd 1px, transparent 1px) 100% 7px / 7px 12.290px repeat-y;
    border-right: 1px solid #d4d4d4;
}

/* rotated, so border-bottom is the tick above the number */
.ruler-left span {
    flex: 0 0 49.160px;
    writing-mode: vertical-rl;
    transform: rotate(180deg);
    font-size: 11px;
    line-height: 8px;
    color: #999;
    border-bottom: 1px solid #d4d4d4;
    text-align: right;
}

.ruler-left span:last-child {
    flex-basis: 23px;
}

.canvas {
    background: #fff;
    padding-left: 251px;
    overflow: hidden;
}

.sheet {
    width: 731px;
    height: 473px;
    background: #f8fbff;
    border-left: 1px solid #b5b5b5;
    border-right: 2px solid #b5b5b5;
    border-bottom: 2px solid #b5b5b5;
}

.labels {
    font-family: "Liberation Sans", sans-serif;
    font-size: 8.500px;
    fill: #3f7fae;
}

.vscroll {
    grid-row: 1 / 3;
    grid-column: 3;
    display: flex;
    flex-direction: column;
}

.sb-btn {
    flex: 0 0 14px;
    border: 1px solid #bdbdbd;
    background: #fff;
    display: flex;
    align-items: center;
    justify-content: center;
}

.sb-track {
    flex: 0 0 93px;
    background: #eee;
}

.sb-thumb {
    flex: 0 0 293px;
    background: #fff;
    border: 1px solid #bdbdbd;
}

.sb-rest {
    flex: 1;
    background: #eee;
}

.tri-up.big {
    border-width: 0 5px 6px;
    border-color: transparent transparent #666;
}

.tri-down.big {
    border-width: 6px 5px 0;
    border-color: #666 transparent transparent;
}

.hscroll {
    grid-column: 1 / 4;
    display: flex;
    padding: 1px 16px 1px 2px;
    background: #eee;
}

.hs-track {
    flex: 0 0 45px;
}

.hs-thumb {
    flex: 1;
    background: #fff;
    border: 1px solid #bdbdbd;
}

.tri-left {
    border-width: 5px 6px 5px 0;
    border-color: transparent #666 transparent transparent;
}

.tri-right {
    border-width: 5px 0 5px 6px;
    border-color: transparent transparent transparent #666;
}

.sidepanel {
    width: 36px;
    display: flex;
    flex-direction: column;
    align-items: center;
    gap: 8px;
    padding-left: 4px;
}

.sidepanel svg {
    height: 32px;
}

/* page tabs */
.pagebar {
    height: 21px;
    display: flex;
    align-items: center;
    padding-left: 6px;
}

.pb-sep {
    width: 1px;
    height: 12px;
    background: #c8c8c8;
}

.pb-up + .pb-sep {
    margin-left: 8px;
}

.pb-name {
    width: 122px;
    padding: 0 7px 0 6px;
    display: flex;
    align-items: center;
    justify-content: space-between;
    color: #222;
}

.pb-plus {
    width: 28px;
    text-align: center;
    font-size: 22px;
    font-weight: 700;
    line-height: 20px;
    color: #444;
}

.pb-active {
    margin-left: 13px;
    color: #ffa544;
    font-weight: 700;
    letter-spacing: .5px;
}

.colorbar {
    height: 15px;
    display: flex;
    align-items: center;
}

.fill-label {
    width: 27px;
    padding-left: 4px;
    color: #222;
}

.swatches {
    display: flex;
    gap: 1px;
    height: 13px;
}

.swatches i {
    width: 13px;
}

/* status bar */
.statusbar {
    height: 28px;
    background: #4c4c4c;
    color: #eee;
    display: flex;
    align-items: center;
    padding-left: 11px;
    position: relative;
}

.status-url {
    text-decoration: underline;
    letter-spacing: -.2px;
    margin-right: 10px;
}

.status-right {
    margin-left: auto;
    display: flex;
    align-items: center;
    gap: 5px;
    margin-right: 28px;
}

.view-on {
    width: 20px;
    height: 24px;
    background: #b5b5b5;
    display: flex;
    align-items: center;
    justify-content: center;
    margin-right: -3px;
}

.zm-sign {
    width: 14px;
    text-align: center;
    font-size: 16px;
}

.zm-minus {
    margin-left: 2px;
}

.slider {
    width: 89px;
    height: 2px;
    background: #ddd;
    position: relative;
    margin: 0 -2px 0 0;
}

.slider i {
    position: absolute;
    left: 13px;
    top: -5px;
    width: 7px;
    height: 12px;
    background: #eee;
    border: 1px solid #999;
}

.zm-val {
    margin-left: 9px;
    color: #ddd;
}

.zm-caret {
    border-top-color: #777;
    margin: 0 6px 0 2px;
}

.grip {
    position: absolute;
    right: 0;
    bottom: 0;
}

/* system panel */
.taskbar {
    height: 28px;
    background: #2f2f2f;
    border-top: 1px solid #222;
    display: flex;
    align-items: center;
    position: relative;
}

.launch {
    width: 212px;
    display: flex;
    align-items: center;
    padding-left: 4px;
}

.task-txt {
    font-weight: 700;
    font-size: 13px;
    line-height: 16px;
    padding-bottom: 2px;
    color: #a0a0a0;
    letter-spacing: .4px;
    white-space: nowrap;
}

.menu-txt {
    margin-left: 5px;
}

.lc-files {
    margin-left: 11px;
}

.lc-fox {
    margin-left: 16px;
}

.lc-term {
    margin-left: 6px;
}

.lc-fold {
    margin-left: 6px;
}

.task {
    display: flex;
    align-items: center;
    gap: 5px;
    height: 27px;
    flex: none;
}

.t-java {
    width: 162px;
}

.t-pics {
    width: 162px;
}

.t-term {
    width: 160px;
}

.t-edraw {
    width: 155px;
    margin: 0 9px 0 -2px;
    padding-left: 2px;
    gap: 6px;
    border-bottom: 3px solid #8eaa6e;
}

.t-edraw .task-txt {
    color: #f2f2f2;
}

.t-proj {
    width: 161px;
}

.t-shot {
    width: 163px;
    gap: 6px;
}

.tray {
    display: flex;
    align-items: center;
    margin-left: auto;
    padding-right: 4px;
}

.tr-clip {
    margin-left: 9px;
}

.tr-user {
    margin-left: 8px;
}

.tr-wifi {
    margin-left: 8px;
}

.tr-batt {
    margin-left: 10px;
}

.clock {
    margin-left: 8px;
}

.tr-vol {
    margin-left: 6px;
}
```
